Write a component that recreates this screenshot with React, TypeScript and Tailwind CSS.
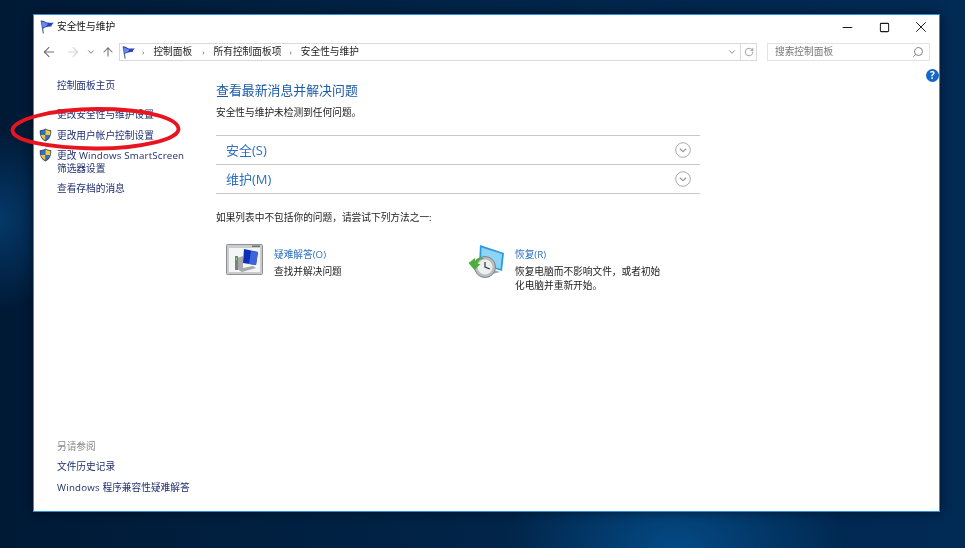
import { ArrowLeft, ArrowRight, ArrowUp, ChevronDown, RotateCw, Search, Minus, Square, X } from "lucide-react";

function Flag({ size = 14 }: { size?: number }) {
  return (
    <svg width={size} height={size} viewBox="0 0 14 14">
      <path d="M1.2 0.5 L3.4 13.5" stroke="#5d6f8c" strokeWidth="1.3" fill="none" />
      <path d="M1.2 0.8 C4 0 5 2.2 7.5 2.6 C9.6 3 11.5 2.4 14 2.8 C12.6 3.8 11.600 5 11.4 6.600 C9.4 6.200 7.6 6.800 6 7.200 C4.800 7.500 3.500 8 2.600 9 Z" fill="#2a44bd" />
      <path d="M1.600 1.800 C4 1.600 5.500 3.400 8 3.800 L6 6.400 C4.800 6.600 3.500 6.900 2.400 7.600 Z" fill="#6a88ea" />
    </svg>
  );
}

function Shield() {
  return (
    <svg width={13} height={14} viewBox="0 0 13 14">
      <path d="M6.5 0.5 C8 1.6 10 2.2 12.2 2.2 C12.6 7 11 11 6.5 13.5 C2 11 0.4 7 0.8 2.2 C3 2.2 5 1.6 6.5 0.5 Z" fill="#3a4a63" />
      <path d="M6.5 1.6 L6.5 7 L1.8 7 C1.6 5.6 1.6 4.4 1.7 3.1 C3.4 3 5.1 2.5 6.5 1.6 Z" fill="#2f6fc4" />
      <path d="M6.5 1.6 C7.9 2.5 9.6 3 11.3 3.1 C11.4 4.4 11.4 5.6 11.2 7 L6.5 7 Z" fill="#f4c63a" />
      <path d="M1.8 7 L6.5 7 L6.5 12.3 C4 10.8 2.4 9.2 1.8 7 Z" fill="#f4c63a" />
      <path d="M6.5 7 L11.2 7 C10.6 9.2 9 10.8 6.5 12.3 Z" fill="#2f6fc4" />
    </svg>
  );
}

function TroubleIcon() {
  return (
    <svg width={37} height={31} viewBox="0 0 37 31">
      <rect x="0.5" y="0.5" width="36" height="30" rx="1" fill="#c9cbcd" stroke="#8d9093" />
      <rect x="3" y="4" width="31" height="24" fill="#f4f5f5" />
      <rect x="26" y="1.5" width="8" height="1.5" fill="#6f7377" />
      <path d="M18 5 L32 8 L30 21 L17 19 Z" fill="#0d2fb8" />
      <path d="M25 7 L32 8 L30 21 L23 20 Z" fill="#3d64dc" />
      <path d="M11 14 L17 12 L17 24 L27 22 L30 24 L16 28 L11 25 Z" fill="#a6a9ab" />
      <rect x="9" y="12" width="3" height="14" fill="#7b7f80" />
      <rect x="10" y="14" width="1" height="2" fill="#7ddc6b" />
    </svg>
  );
}

function RecoveryIcon() {
  return (
    <svg width={37} height={35} viewBox="0 0 37 35">
      <path d="M12 1 L36 9 L34 27 L11 20 Z" fill="#2c9be0" />
      <path d="M13.5 3.5 L34 10 L32.5 25 L13 19 Z" fill="#8ed4f5" />
      <path d="M22 25 L32 28 L24 30 Z" fill="#9aa3aa" />
      <circle cx="17" cy="23" r="10.5" fill="#b9bdc1" stroke="#7e8388" />
      <circle cx="17" cy="23" r="7.5" fill="#eceef0" />
      <path d="M17 18 L17 23 L22 25" stroke="#33373b" strokeWidth="1.2" fill="none" />
      <path d="M0.5 19 L7 14 L7 17 C10 13 14 13 16 14.5 C12 15 10 17 9.5 20 L12.5 20 L6.5 26 Z" fill="#4cae3c" />
    </svg>
  );
}

function CircleChevron() {
  return (
    <svg width={16} height={16} viewBox="0 0 16 16" fill="none">
      <circle cx="8" cy="8" r="7.3" stroke="#a9a9a9" />
      <path d="M4.8 6.8 L8 9.8 L11.2 6.8" stroke="#9a9a9a" strokeWidth="1.2" />
    </svg>
  );
}

function SideLink({ children, icon }: { children: React.ReactNode; icon?: boolean }) {
  return (
    <div className="relative pl-[23px] text-[9.7px] leading-[13px] text-[#1f2f70]">
      {icon && (
        <span className="absolute left-[5px] top-[-1px]">
          <Shield />
        </span>
      )}
      {children}
    </div>
  );
}

export default function App() {
  return (
    <div
      className="relative w-[965px] h-[548px] overflow-hidden pl-[33px] pt-[14px] bg-[radial-gradient(ellipse_170px_110px_at_70%_100%,#044a85_0%,transparent_100%),radial-gradient(ellipse_70px_90px_at_0%_40%,#053868_0%,transparent_100%),linear-gradient(to_right,#001a36_0%,#012448_50%,#012a55_100%)]"
      style={{ fontFamily: '"Open Sans", "Noto Sans CJK SC", "Liberation Sans", sans-serif' }}
    >
      <div className="w-[907px] h-[498px] bg-white border border-[#2b8fe3] shadow-[0_0_10px_rgba(0,0,0,0.45)] flex flex-col text-[#222]">
        {/* the reference is a slightly soft, rescaled capture */}
        <div className="flex-1 flex flex-col min-h-0 blur-[0.3px]">
          {/* title bar */}
          <div className="h-[24px] flex items-center shrink-0 pl-[6px]">
            <Flag />
            <span className="ml-[3px] text-[9.7px] text-[#111]">安全性与维护</span>
            <div className="ml-auto flex items-center text-[#1a1a1a]">
              <Minus size={15} strokeWidth={1.6} className="mr-[24px]" />
              <Square size={11} strokeWidth={2.2} className="mr-[22px]" />
              <X size={18} strokeWidth={1.3} className="mr-[9px]" />
            </div>
          </div>
          {/* address bar */}
          <div className="h-[18px] mt-[4px] flex items-center shrink-0">
            <ArrowLeft size={16} strokeWidth={1.6} className="ml-[7px] text-[#707070]" />
            <ArrowRight size={16} strokeWidth={1.6} className="ml-[8px] text-[#d6d6d6]" />
            <ChevronDown size={10} strokeWidth={2.2} className="ml-[5px] text-[#777]" />
            <ArrowUp size={14} strokeWidth={1.8} className="ml-[5px] text-[#707070]" />
            <div className="ml-[4px] w-[638px] h-[18px] border border-[#d9d9d9] flex items-center">
              <span className="ml-[2px]"><Flag size={13} /></span>
              <span className="ml-[7px] text-[#555] text-[8px]">›</span>
              <span className="ml-[9px] text-[9.7px]">控制面板</span>
              <span className="ml-[10px] text-[#555] text-[8px]">›</span>
              <span className="ml-[9px] text-[9.7px]">所有控制面板项</span>
              <span className="ml-[8px] text-[#555] text-[8px]">›</span>
              <span className="ml-[9px] text-[9.7px]">安全性与维护</span>
              <ChevronDown size={10} strokeWidth={1.8} className="ml-auto mr-[3px] text-[#666]" />
              <div className="h-full w-[16px] border-l border-[#d9d9d9] flex items-center justify-center">
                <RotateCw size={10} strokeWidth={1.6} className="text-[#777]" />
              </div>
            </div>
            <div className="ml-[10px] w-[163px] h-[18px] border border-[#e3e3e3] flex items-center pl-[7px] pr-[5px]">
              <span className="text-[9.7px] text-[#777]">搜索控制面板</span>
              <Search size={12} strokeWidth={1.8} className="ml-auto text-[#777] -scale-x-100" />
            </div>
          </div>
          {/* body */}
          <div className="flex-1 flex min-h-0 relative">
            <div className="w-[182px] shrink-0 flex flex-col pt-[18px] pb-[17px]">
              <SideLink>控制面板主页</SideLink>
              <div className="mt-[16px]"><SideLink>更改安全性与维护设置</SideLink></div>
              <div className="mt-[8px]"><SideLink icon>更改用户帐户控制设置</SideLink></div>
              <div className="mt-[7px]"><SideLink icon>更改 <span className="tracking-[0.2px]">Windows SmartScreen</span><br />筛选器设置</SideLink></div>
              <div className="mt-[7px]"><SideLink>查看存档的消息</SideLink></div>
              <div className="mt-auto"><div className="pl-[23px] text-[9.7px] leading-[13px] text-[#8a8a8a]">另请参阅</div></div>
              <div className="mt-[7px]"><SideLink>文件历史记录</SideLink></div>
              <div className="mt-[8px]"><SideLink><span className="tracking-[0.25px]">Windows</span> 程序兼容性疑难解答</SideLink></div>
            </div>
            <div className="flex-1 flex flex-col pt-[20px]">
              <h1 className="text-[12.9px] leading-[18px] font-normal text-[#1d5ba8]">查看最新消息并解决问题</h1>
              <p className="mt-[7px] text-[9.7px] leading-[13px] text-[#222]">安全性与维护未检测到任何问题。</p>
              <div className="mt-[16px] w-[484px] border-t border-[#c8c8c8]">
                <div className="h-[29px] flex items-center pl-[10px] pr-[9px] border-b border-[#c8c8c8]">
                  <span className="mt-[2px] text-[13px] text-[#2a6fc4]">安全(S)</span>
                  <span className="ml-auto"><CircleChevron /></span>
                </div>
                <div className="h-[29px] flex items-center pl-[10px] pr-[9px] border-b border-[#c8c8c8]">
                  <span className="mt-[2px] text-[13px] text-[#2a6fc4]">维护(M)</span>
                  <span className="ml-auto"><CircleChevron /></span>
                </div>
              </div>
              <p className="mt-[17px] text-[9.7px] leading-[13px] text-[#222]">如果列表中不包括你的问题，请尝试下列方法之一:</p>
              <div className="mt-[20px] flex">
                <div className="w-[252px] flex pl-[10px]">
                  <TroubleIcon />
                  <div className="ml-[11px] mt-[4px]">
                    <div className="text-[9.7px] leading-[13px] text-[#2a6fc4]">疑难解答(O)</div>
                    <div className="mt-[4px] text-[9.7px] leading-[13px] text-[#222]">查找并解决问题</div>
                  </div>
                </div>
                <div className="flex">
                  <RecoveryIcon />
                  <div className="ml-[10px] mt-[4px] w-[150px]">
                    <div className="text-[9.7px] leading-[13px] text-[#2a6fc4]">恢复(R)</div>
                    <div className="mt-[4px] text-[9.7px] leading-[14px] text-[#222]">恢复电脑而不影响文件，或者初始<br />化电脑并重新开始。</div>
                  </div>
                </div>
              </div>
            </div>
            <div className="absolute right-0 top-[8px] w-[13px] h-[13px] rounded-full bg-[#1668c4] text-white text-[10px] leading-[13px] font-bold text-center">?</div>
          </div>
        </div>
      </div>
      {/* red annotation drawn over the sidebar */}
      <svg className="absolute left-0 top-0" width={200} height={170} viewBox="0 0 200 170" fill="none">
        <path
          d="M12.500 130 C13 120 50 109 98 109 C145 109 178 118 178.500 129 C179 139 140 149 95 148.500 C50 148 12 141 12.500 130 Z"
          stroke="#e8141f"
          strokeWidth="3.8"
        />
      </svg>
    </div>
  );
}
